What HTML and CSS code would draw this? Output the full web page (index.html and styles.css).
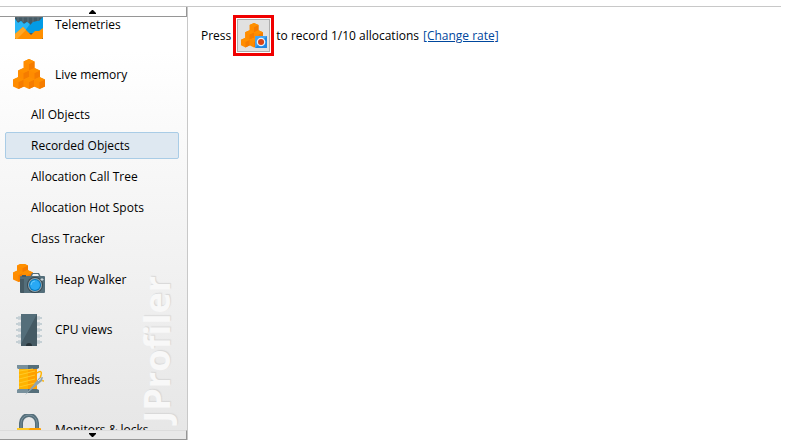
FILE: index.html
```html
<!DOCTYPE html>
<html lang="en">
<head>
    <meta charset="UTF-8">
    <meta name="viewport" content="width=device-width, initial-scale=1.0">
    <title>JProfiler</title>
    <link rel="stylesheet" href="styles.css">
</head>
<body>

    <!-- one cube, reused by all the object icons -->
    <svg class="defs" width="0" height="0" aria-hidden="true">
        <defs>
            <g id="cube">
                <path d="M0 2.500L5.500 0L11 2.500V9.500L5.500 12L0 9.500Z" fill="#ff8c00"/>
                <path d="M11 2.500L5.500 5V12L11 9.500Z" fill="#f57c00"/>
                <path d="M0 2.500L5.500 0L11 2.500L5.500 5Z" fill="#ff9000"/>
            </g>
            <g id="pile">
                <use href="#cube" x="10.500" y="0"/>
                <use href="#cube" x="5" y="9"/>
                <use href="#cube" x="16" y="9"/>
                <use href="#cube" x="0" y="18"/>
                <use href="#cube" x="10.500" y="18"/>
                <use href="#cube" x="21" y="18"/>
            </g>
        </defs>
    </svg>

    <div class="window">
        <nav class="sidebar">
            <button type="button" class="scroll scroll-up" aria-label="Scroll up">
                <svg width="7" height="4" viewBox="0 0 7 4"><path d="M3 0H4L7 3V4H0V3Z"/></svg>
            </button>

            <div class="views">
                <div class="watermark" aria-hidden="true">JProfiler</div>
                <ul class="view-list">
                    <li>
                        <a class="view" href="#">
                            <svg class="icon" viewBox="0 0 32 32">
                                <path d="M2 2H30V30H2Z" fill="#455a64"/>
                                <path d="M5 2V12M10 2V13M15 2V16M20 2V16M25 2V13M2 8H30" stroke="#60747e" fill="none"/>
                                <path d="M2 10L5 14L8 12L11 15L14 13L17 16L20 13L24 12H26L30 8V24H2Z" fill="#039be5"/>
                                <path d="M2 10L5 14L8 12L11 15L14 13L17 15L9 26H2Z" fill="#29b6f6"/>
                                <path d="M2 25L10 18L14 22L18 26L22 22L26 22L30 19V29L29 30H3L2 29Z" fill="#ff8f00"/>
                                <path d="M2 25L10 18L13 21L4 30H3L2 29Z" fill="#ffa726"/>
                            </svg>
                            Telemetries
                        </a>
                    </li>
                    <li>
                        <a class="view" href="#">
                            <svg class="icon" viewBox="0 0 32 32"><use href="#pile"/></svg>
                            Live memory
                        </a>
                        <ul class="sub-list">
                            <li><a class="sub-view" href="#">All Objects</a></li>
                            <li><a class="sub-view selected" href="#" aria-current="page">Recorded Objects</a></li>
                            <li><a class="sub-view" href="#">Allocation Call Tree</a></li>
                            <li><a class="sub-view" href="#">Allocation Hot Spots</a></li>
                            <li><a class="sub-view" href="#">Class Tracker</a></li>
                        </ul>
                    </li>
                    <li>
                        <a class="view" href="#">
                            <svg class="icon" viewBox="0 0 32 32">
                                <use href="#cube" x="4" y="-1"/>
                                <use href="#cube" x="0" y="6"/>
                                <use href="#cube" x="9" y="6"/>
                                <path d="M17 13L19 9H26L28 13Z" fill="#546e7a"/>
                                <path d="M19 12L20 10H25L26 12Z" fill="#eceff1"/>
                                <rect x="7" y="12" width="25" height="17" rx="1" fill="#546e7a"/>
                                <path d="M7 15H11V29H8L7 28Z" fill="#455a64"/>
                                <rect x="9" y="11" width="4" height="2" fill="#455a64"/>
                                <circle cx="22" cy="21" r="8" fill="#37474f"/>
                                <circle cx="22" cy="21" r="7" fill="#90a4ae"/>
                                <circle cx="22" cy="21" r="6" fill="#0277bd"/>
                                <circle cx="22" cy="21" r="5" fill="#29a9f5"/>
                                <path d="M18 21A4 4 0 0 1 22 17" stroke="#64c8fa" fill="none"/>
                                <path d="M29 14V17M27.500 15.500H30.500" stroke="#cfd8dc"/>
                            </svg>
                            Heap Walker
                        </a>
                    </li>
                    <li>
                        <a class="view" href="#">
                            <svg class="icon" viewBox="0 0 32 32">
                                <path d="M5 4H27M5 10H27M5 16H27M5 22H27M5 28H27" stroke="#b0bec5" stroke-width="3"/>
                                <path d="M3 4H29M3 10H29M3 16H29M3 22H29M3 28H29" stroke="#c5d0d5" stroke-width="2"/>
                                <rect x="8" y="0" width="16" height="32" fill="#455a64"/>
                                <path d="M8 0H24L8 30Z" fill="#546e7a"/>
                                <path d="M13 32A3 3 0 0 1 19 32Z" fill="#263238"/>
                            </svg>
                            CPU views
                        </a>
                    </li>
                    <li>
                        <a class="view" href="#">
                            <svg class="icon" viewBox="0 0 32 32">
                                <path d="M4 1H26V4L24 5H6L4 4Z" fill="#546e7a"/>
                                <path d="M4 1H15V5H6L4 4Z" fill="#78909c"/>
                                <path d="M6 25H24L26 26V29H4V26Z" fill="#546e7a"/>
                                <path d="M6 25H15V29H4V26Z" fill="#78909c"/>
                                <rect x="6" y="5" width="18" height="20" fill="#ffb300"/>
                                <path d="M15 5H24V25H15Z" fill="#ffa000"/>
                                <path d="M6 7L20 5M6 11L22 7M6 15L22 11M6 19L22 15M6 23L22 19" stroke="#ffca28"/>
                                <path d="M24 9C28 6 29 8 28 11C26 16 29 17 31 17" stroke="#ffb300" stroke-width="1.500" fill="none"/>
                                <path d="M12 31L26 14L30 13L29 17Z" fill="#90a4ae"/>
                                <path d="M25 17L28 14.500" stroke="#eceff1"/>
                            </svg>
                            Threads
                        </a>
                    </li>
                    <li>
                        <a class="view" href="#">
                            <svg class="icon" viewBox="0 0 32 32">
                                <path d="M8 16V9A8 8 0 0 1 24 9V16" stroke="#546e7a" stroke-width="4" fill="none"/>
                                <path d="M8 16V9A8 8 0 0 1 24 9V16" stroke="#78909c" fill="none"/>
                                <rect x="4" y="14" width="24" height="17" rx="1" fill="#ffa000"/>
                                <path d="M4 14H17L4 30Z" fill="#ffca28"/>
                            </svg>
                            Monitors &amp; locks
                        </a>
                    </li>
                </ul>
            </div>

            <button type="button" class="scroll scroll-down" aria-label="Scroll down">
                <svg width="7" height="4" viewBox="0 0 7 4"><path d="M0 0H7V1L4 4H3L0 1Z"/></svg>
            </button>
        </nav>

        <main class="content">
            <p class="hint">
                <span>Press</span>
                <span class="highlight">
                    <button type="button" class="record" aria-label="Record allocations">
                        <svg width="26" height="26" viewBox="0 0 24 24">
                            <use href="#pile" transform="scale(.75)"/>
                            <rect x="13" y="12" width="11" height="11" fill="#42a5f5"/>
                            <path d="M13 23H24V12Z" fill="#1e88e5"/>
                            <circle cx="18.500" cy="17.500" r="4" fill="#e3f2fd"/>
                            <circle cx="18.500" cy="17.500" r="2.800" fill="#d84315"/>
                        </svg>
                    </button>
                </span>
                <span>to record 1/10 allocations</span>
                <a class="rate" href="#">[Change rate]</a>
            </p>
        </main>
    </div>

</body>
</html>
```

FILE: styles.css
```css
* {
    box-sizing: border-box;
}
body {
    margin: 0;
    background: #fff;
    color: #000;
    font: 12px/18px "Open Sans", "Noto Sans", sans-serif;
}
ul {
    list-style: none;
    margin: 0;
    padding: 0;
}
a {
    color: inherit;
    text-decoration: none;
}
.defs {
    position: absolute;
}
.window {
    display: flex;
    height: calc(100vh - 7px);
    margin: 6px 14px 1px 0;
    border-top: 1px solid #c8c8c8;
}

/* sidebar */
.sidebar {
    display: flex;
    flex-direction: column;
    flex: none;
    width: 188px;
    border-right: 1px solid #c8c8c8;
    background: linear-gradient(#fff 10%, #e6e6e6);
}
.scroll {
    display: flex;
    align-items: center;
    justify-content: center;
    flex: none;
    height: 10px;
    padding: 0 2px 0 0;
    border: 0 solid #969696;
    border-width: 0 1px 1px 0;
}
.scroll-up {
    background: #fff;
}
.scroll-down {
    border-top: 1px solid #dcdcdc;
    background: #e8e8e8;
}
.views {
    position: relative;
    flex: 1;
    min-height: 0;
    overflow: hidden;
}
/* scrolled down a little */
.view-list {
    position: relative;
    margin-top: -17px;
}
.view {
    display: flex;
    align-items: center;
    gap: 10px;
    height: 50px;
    padding-left: 13px;
}
.icon {
    width: 32px;
    height: 32px;
}
.sub-list li {
    height: 31px;
    padding: 1px 8px 3px 5px;
}
.sub-view {
    display: flex;
    align-items: center;
    height: 27px;
    padding-left: 25px;
    border: 1px solid transparent;
    border-radius: 2px;
}
.selected {
    border-color: #a9cce6;
    background: #dee8f1;
}
.watermark {
    position: absolute;
    right: 8px;
    bottom: 7px;
    color: #f8f8f8;
    font: bold 36px/44px "Open Sans", sans-serif;
    text-shadow: 1px 1px 1px #d8d8d8;
    writing-mode: vertical-rl;
    transform: rotate(180deg);
}

/* content */
.content {
    flex: 1;
    padding: 8px 13px;
}
.hint {
    display: flex;
    align-items: center;
    gap: 2px;
    margin: 0;
}
.highlight {
    padding: 1px;
    border: 3px solid #f00000;
}
.record {
    display: flex;
    align-items: center;
    justify-content: center;
    width: 33px;
    height: 33px;
    padding: 0;
    border: 1px solid #adadad;
    background: #e1e1e1;
}
.rate {
    margin-left: 2px;
    color: #00479d;
    text-decoration: underline;
}
```
